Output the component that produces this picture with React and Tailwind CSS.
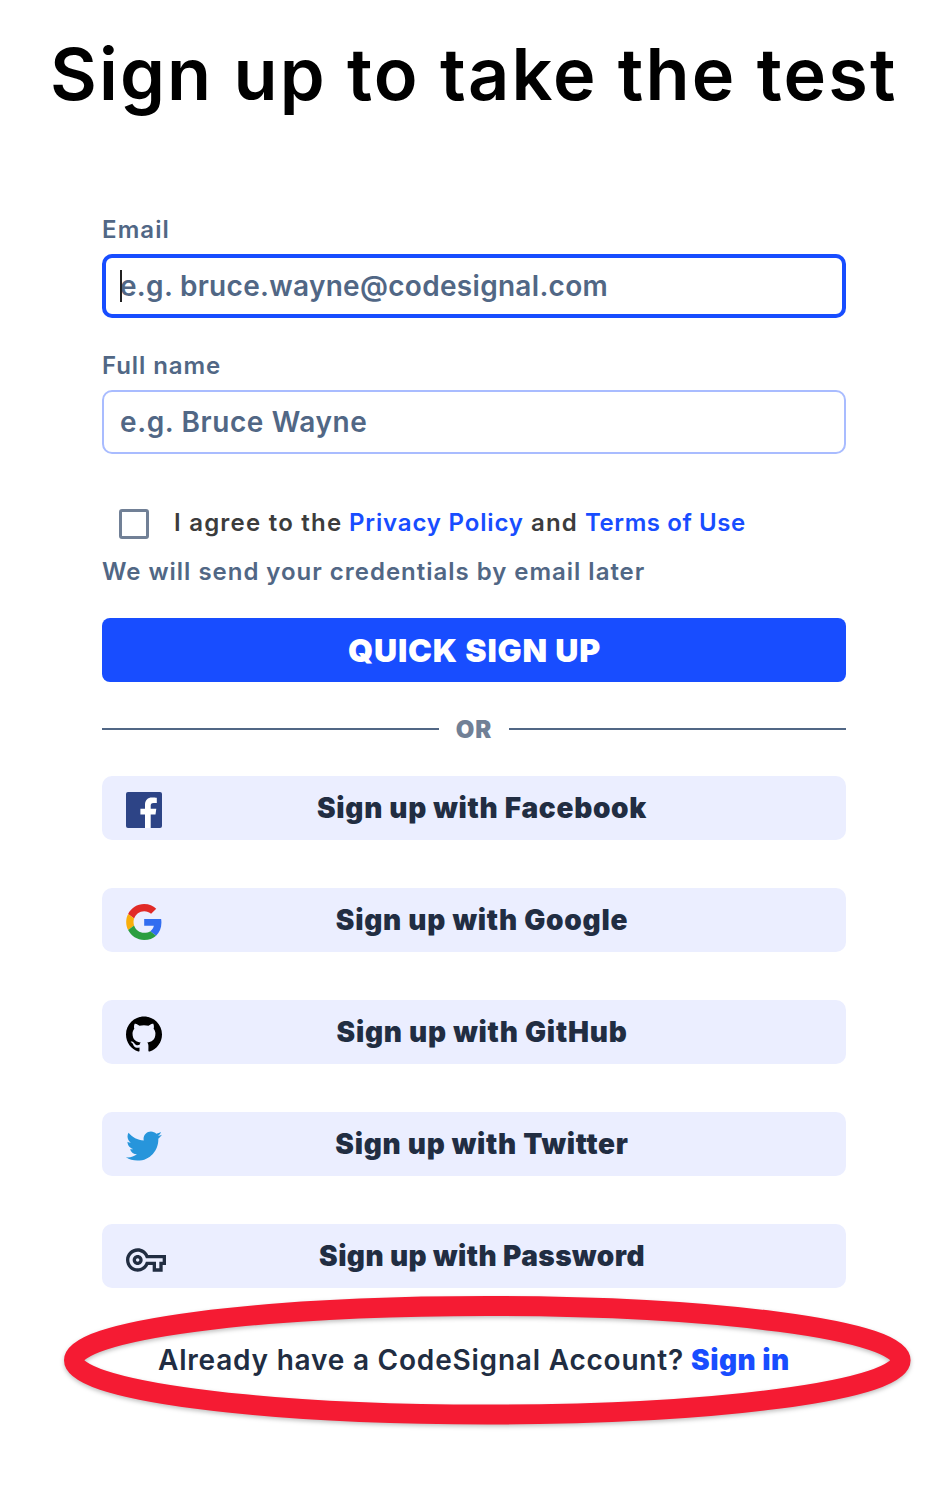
import React from "react";
import { FaTwitter } from "react-icons/fa";
import { SiGithub } from "react-icons/si";
import { MdOutlineVpnKey } from "react-icons/md";

function FacebookIcon() {
  return (
    <svg className="size-9" viewBox="0 0 36 36">
      <rect width="36" height="36" rx="2" fill="#2d4486" />
      <path
        fill="#fff"
        d="M19 36V22.6h-4.6v-5.8H19v-4.2c0-4.6 2.8-7.2 7-7.2 2 0 3.7.15 4.8.3v5.2h-3.1c-2.5 0-3 1.2-3 2.9v3h5.6l-.8 5.8h-4.8V36z"
      />
    </svg>
  );
}

function GoogleIcon() {
  return (
    <svg className="size-9" viewBox="0 0 47.5 48">
      <path fill="#e12a27" d="M24 9.5c3.54 0 6.71 1.22 9.21 3.6l6.85-6.85C35.9 2.38 30.47 0 24 0 14.62 0 6.51 5.38 2.56 13.22l7.98 6.19C12.43 13.72 17.74 9.5 24 9.5z" />
      <path fill="#326df0" d="M46.98 24.55c0-1.57-.15-3.09-.38-4.55H24v9.02h12.94c-.58 2.96-2.26 5.48-4.78 7.18l7.73 6c4.51-4.18 7.09-10.36 7.09-17.65z" />
      <path fill="#f9ae0b" d="M10.53 28.59c-.48-1.45-.76-2.99-.76-4.59s.27-3.14.76-4.59l-7.98-6.19C.92 16.46 0 20.12 0 24c0 3.88.92 7.54 2.56 10.78l7.97-6.19z" />
      <path fill="#2b9e40" d="M24 48c6.48 0 11.93-2.13 15.89-5.81l-7.73-6c-2.15 1.45-4.92 2.3-8.16 2.3-6.26 0-11.57-4.22-13.47-9.91l-7.98 6.19C6.51 42.62 14.62 48 24 48z" />
    </svg>
  );
}

const providers = [
  { name: "Facebook", icon: <FacebookIcon />, tracking: "tracking-[0.7px]" },
  { name: "Google", icon: <GoogleIcon />, tracking: "tracking-[0.76px]" },
  { name: "GitHub", icon: <SiGithub className="size-9 text-black" />, tracking: "tracking-[0.76px]" },
  { name: "Twitter", icon: <FaTwitter className="size-9 text-[#2795db]" />, tracking: "tracking-[0.72px]" },
  { name: "Password", icon: <MdOutlineVpnKey className="mt-1 size-10" />, tracking: "tracking-[0.42px]" },
];

export default function App() {
  return (
    <main className="relative h-[1486px] w-[950px] overflow-hidden bg-white font-['Inter',sans-serif] font-semibold text-[#212d42]">
      <h1 className="pt-[34px] pl-[50px] text-[72px] leading-20 tracking-[2.12px] whitespace-nowrap text-black">
        Sign up to take the test
      </h1>

      <form className="mt-[100px] ml-[102px] flex w-[744px] flex-col">
        <label className="text-2xl leading-8 tracking-[1.1px] text-[#516785]" htmlFor="email">
          Email
        </label>
        <div className="relative mt-2">
          <input
            id="email"
            placeholder="e.g. bruce.wayne@codesignal.com"
            className="block h-16 w-full rounded-[10px] border-4 border-[#184dff] px-3.5 text-[28px] tracking-[0.3px] outline-none placeholder:text-[#516785] placeholder:opacity-100"
          />
          <span className="absolute top-4 left-[18px] h-8 w-0.5 bg-[#212121]" />
        </div>

        <label className="mt-8 text-2xl leading-8 tracking-[0.92px] text-[#516785]" htmlFor="name">
          Full name
        </label>
        <input
          id="name"
          placeholder="e.g. Bruce Wayne"
          className="mt-2 block h-16 w-full rounded-[10px] border-2 border-[#a9bcff] px-4 text-[28px] tracking-[0.6px] outline-none placeholder:text-[#516785] placeholder:opacity-100"
        />

        <div className="mt-[53px] flex h-8 items-center pl-[17px] text-2xl leading-8 whitespace-nowrap text-[#3c3c3c]">
          <span className="mt-0.5 size-[30px] shrink-0 rounded-[3px] border-[3px] border-[#718096]" />
          <span className="ml-[25px] w-[175px] tracking-[1.22px]">I agree to the</span>
          <a className="w-[182px] tracking-[0.84px] text-[#184dff]">Privacy Policy</a>
          <span className="w-[54px] tracking-[1.2px]">and</span>
          <a className="tracking-[0.58px] text-[#184dff]">Terms of Use</a>
        </div>
        <p className="mt-[17px] text-2xl leading-8 tracking-[0.98px] whitespace-nowrap text-[#516785]">
          We will send your credentials by email later
        </p>

        <button
          type="button"
          className="mt-[30px] h-16 rounded-lg bg-[#184dff] pt-px pl-px text-[32px] leading-8 font-black tracking-[0.85px] text-white"
        >
          QUICK SIGN UP
        </button>

        <div className="mt-[31px] flex h-8 items-center text-2xl font-black text-[#718096]">
          <span className="h-0.5 w-[337px] bg-[#516785]" />
          <span className="w-[70px] pt-0.5 text-center tracking-[1px]">OR</span>
          <span className="h-0.5 flex-1 bg-[#516785]" />
        </div>

        <div className="mt-[31px] flex flex-col gap-12">
          {providers.map(({ name, icon, tracking }) => (
            <button
              key={name}
              type="button"
              className="flex h-16 items-center rounded-[10px] bg-[#ebeeff] pr-12 pl-6"
            >
              <span className="mt-1 w-10">{icon}</span>
              <span className={`flex-1 text-center text-[28px] leading-8 font-black ${tracking}`}>
                Sign up with {name}
              </span>
            </button>
          ))}
        </div>

        <p className="mt-14 flex pl-14 text-[28px] leading-8 whitespace-nowrap">
          <span className="w-[533px] tracking-[0.79px]">Already have a CodeSignal Account?</span>
          <a className="font-black tracking-[0.5px] text-[#184dff]">Sign in</a>
        </p>
      </form>

      <svg className="pointer-events-none absolute top-[1280px] left-[50px] drop-shadow-[0_2px_2px_rgba(0,0,0,0.25)]" width="880" height="160">
        <ellipse cx="437.3" cy="80.3" rx="413.3" ry="54.3" fill="none" stroke="#f51b33" strokeWidth="20" />
      </svg>
    </main>
  );
}
